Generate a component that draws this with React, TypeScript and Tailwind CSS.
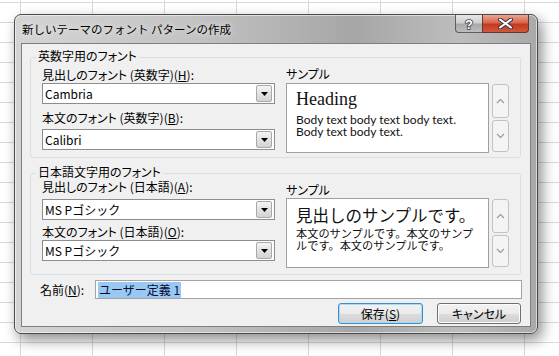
import React from "react";

const label = "text-[12px] leading-[16px] text-black [font-feature-settings:'palt'] whitespace-nowrap";

const Key = ({ k }: { k: string }) => <span className="underline underline-offset-[1px]">{k}</span>;

const ComboBox = ({ value }: { value: string }) => (
  <div className="h-[21px] w-[233px] border border-[#8d8d8d] bg-white flex items-center">
    <span className="flex-1 pl-[2px] text-[12px] leading-[16px] text-black">{value}</span>
    <div className="w-[16px] h-[17px] mr-[2px] rounded-[2px] border border-[#a9a9a9] bg-[linear-gradient(to_bottom,#f4f4f4,#e2e2e2_50%,#d3d3d3)] flex items-center justify-center">
      <svg width="7" height="4" viewBox="0 0 7 4">
        <path d="M0 0h7L3.5 4z" fill="#000" />
      </svg>
    </div>
  </div>
);

const ScrollButtons = () => (
  <div className="flex flex-col gap-[2px] pt-[1px]">
    <div className="w-[17px] h-[34px] rounded-[3px] border border-[#c2c2c2] bg-[#f4f4f4] flex items-center justify-center">
      <svg width="9" height="6" viewBox="0 0 9 6">
        <polyline points="1,5 4.5,1.5 8,5" fill="none" stroke="#9a9a9a" strokeWidth="1.2" />
      </svg>
    </div>
    <div className="w-[17px] h-[32px] rounded-[3px] border border-[#c2c2c2] bg-[#f4f4f4] flex items-center justify-center">
      <svg width="9" height="6" viewBox="0 0 9 6">
        <polyline points="1,1 4.5,4.5 8,1" fill="none" stroke="#9a9a9a" strokeWidth="1.2" />
      </svg>
    </div>
  </div>
);

const GroupBox = ({ title, className, children }: { title: string; className: string; children: React.ReactNode }) => (
  <div className={`relative rounded-[3px] border border-[#d5dfe5] flex pl-[11px] ${className}`}>
    <span className={`absolute -top-[10px] left-[5px] bg-[#f0f0f0] px-[2px] ${label}`}>{title}</span>
    {children}
  </div>
);

const WinButton = ({ children, focused }: { children: React.ReactNode; focused?: boolean }) => (
  <div
    className={`h-[21px] rounded-[3px] border flex items-center justify-center text-[12px] leading-[16px] text-black [font-feature-settings:'palt'] ${
      focused
        ? "w-[85px] border-[#3c8fc8] shadow-[inset_0_0_0_1px_#a8dcf5] bg-[linear-gradient(to_bottom,#f2f2f2,#ebebeb_50%,#dddddd_51%,#d0d0d0)]"
        : "w-[84px] border-[#707070] shadow-[inset_0_0_0_1px_#fcfcfc] bg-[linear-gradient(to_bottom,#f2f2f2,#ebebeb_50%,#dddddd_51%,#cfcfcf)]"
    }`}
  >
    {children}
  </div>
);

export default function App() {
  return (
    <div className="w-[559px] h-[356px] overflow-hidden bg-white bg-[image:linear-gradient(to_right,#d9d9d9_1px,transparent_1px),linear-gradient(to_bottom,#d9d9d9_1px,transparent_1px)] bg-[size:72px_20px] bg-[position:20px_2px] pt-[14px] pl-[14px] font-['Noto_Sans_CJK_JP',sans-serif]">
      {/* Dialog window */}
      <div className="w-[524px] h-[320px] rounded-[7px] border border-[#4b4b4b] flex flex-col bg-[linear-gradient(to_right,#d4d4d4,#c2c2c2_35%,#a6a6a6_65%,#bdbdbd_85%,#a9a9a9)] shadow-[inset_0_0_0_1px_rgba(255,255,255,0.55),4px_6px_14px_rgba(0,0,0,0.45)]">
        {/* Title bar */}
        <div className="h-[28px] flex items-start">
          <span className="pl-[7px] pt-[6px] text-[11.5px] leading-[16px] text-black [text-shadow:0_0_6px_#ffffff]">
            新しいテーマのフォント パターンの作成
          </span>
          <div className="ml-auto mr-[8px] flex">
            <div className="w-[27px] h-[18px] rounded-bl-[4px] border border-t-0 border-r-0 border-[#5e5e5e] bg-[linear-gradient(to_bottom,#e6e6e6,#cfcfcf_45%,#a9a9a9_55%,#bdbdbd)] flex items-center justify-center">
              <svg width="12" height="14" viewBox="0 0 12 14">
                <text x="6" y="12" textAnchor="middle" fontSize="13" fontWeight="bold" fontFamily="Liberation Sans, sans-serif" fill="#ffffff" stroke="#3c3c4a" strokeWidth="1.6" paintOrder="stroke">?</text>
              </svg>
            </div>
            <div className="w-[47px] h-[18px] rounded-br-[4px] border border-t-0 border-[#5e3a34] bg-[linear-gradient(to_bottom,#e9a593,#d9664c_45%,#c23a1f_55%,#d3573c)] flex items-center justify-center">
              <svg width="15" height="11" viewBox="0 0 15 11">
                <path d="M2 1.5L13 9.5M13 1.5L2 9.5" stroke="#3a3a4a" strokeWidth="4" strokeLinecap="round" />
                <path d="M2 1.5L13 9.5M13 1.5L2 9.5" stroke="#ffffff" strokeWidth="2" strokeLinecap="round" />
              </svg>
            </div>
          </div>
        </div>

        {/* Client area */}
        <div className="mx-[6px] mb-[6px] flex-1 border border-[#7e7e7e] bg-[#f0f0f0] pl-[8px] pr-[9px] pt-[13px] flex flex-col">
          <GroupBox title="英数字用のフォント" className="h-[101px]">
            <div className="flex flex-col w-[233px] pt-[9px]">
              <span className={label}>
                見出しのフォント (英数字)(<Key k="H" />):
              </span>
              <ComboBox value="Cambria" />
              <span className={`${label} mt-[6px] mb-[3px]`}>
                本文のフォント (英数字)(<Key k="B" />):
              </span>
              <ComboBox value="Calibri" />
            </div>
            <div className="flex flex-col ml-[11px] pt-[8px]">
              <span className={`${label} mb-[1px]`}>サンプル</span>
              <div className="flex gap-[3px]">
                <div className="w-[203px] h-[70px] border border-[#a0a0a0] bg-white pl-[9px] pt-[4px] text-[#111]">
                  <div className="font-['Liberation_Serif',serif] text-[18px] leading-[22px]">Heading</div>
                  <div className="font-['Lato',sans-serif] text-[12px] leading-[12px] mt-[4px]">
                    Body text body text body text.
                    <br />
                    Body text body text.
                  </div>
                </div>
                <ScrollButtons />
              </div>
            </div>
          </GroupBox>

          <GroupBox title="日本語文字用のフォント" className="h-[102px] mt-[15px]">
            <div className="flex flex-col w-[233px] pt-[5px]">
              <span className={`${label} mb-[4px]`}>
                見出しのフォント (日本語)(<Key k="A" />):
              </span>
              <ComboBox value="MS Pゴシック" />
              <span className={`${label} mt-[4px]`}>
                本文のフォント (日本語)(<Key k="O" />):
              </span>
              <ComboBox value="MS Pゴシック" />
            </div>
            <div className="flex flex-col ml-[11px] pt-[8px]">
              <span className={`${label}`}>サンプル</span>
              <div className="flex gap-[3px]">
                <div className="w-[203px] h-[70px] border border-[#a0a0a0] bg-white pl-[9px] pt-[5px] text-[#111] whitespace-nowrap">
                  <div className="text-[16.5px] leading-[22px]">見出しのサンプルです。</div>
                  <div className="text-[11.2px] leading-[11.5px] mt-[2px]">
                    本文のサンプルです。本文のサンプ
                    <br />
                    ルです。本文のサンプルです。
                  </div>
                </div>
                <ScrollButtons />
              </div>
            </div>
          </GroupBox>

          {/* Name row */}
          <div className="flex items-center mt-[5px]">
            <span className={`${label} ml-[10px] w-[55px]`}>
              名前(<Key k="N" />):
            </span>
            <div className="flex-1 h-[19px] border border-[#a3a3a3] bg-white flex items-center pl-[2px] mr-[-1px]">
              <span className="bg-[#99c9f3] text-[12px] leading-[16px] text-[#0a0a30] px-[1px]">ユーザー定義 1</span>
            </div>
          </div>

          {/* Buttons */}
          <div className="flex justify-end gap-[14px] mt-[4px]">
            <WinButton focused>
              保存(<Key k="S" />)
            </WinButton>
            <WinButton>キャンセル</WinButton>
          </div>
        </div>
      </div>
    </div>
  );
}
